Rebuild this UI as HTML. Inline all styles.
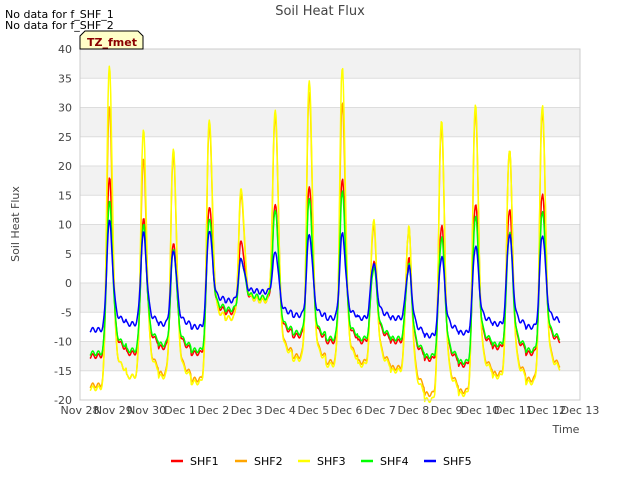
<!DOCTYPE html>
<html><head><meta charset="utf-8"><style>
body{margin:0;background:#fff;}
svg{display:block;font-family:"DejaVu Sans","Liberation Sans",sans-serif;}
</style></head><body>
<svg id="s" width="640" height="480" xmlns="http://www.w3.org/2000/svg">
<rect width="640" height="480" fill="#fff"/>
<g id="bands"></g>
<g id="lines"></g>
<rect x="80" y="49" width="500" height="351" fill="none" stroke="#ccc" stroke-width="1"/>
<text x="320" y="15" font-size="13" fill="#444" text-anchor="middle">Soil Heat Flux</text>
<text x="5" y="18" font-size="11" fill="#000">No data for f_SHF_1</text>
<text x="5" y="29" font-size="11" fill="#000">No data for f_SHF_2</text>
<path d="M80,49 L80,36 L85,31 L138,31 L143,36 L143,49 Z" fill="#ffffc8" stroke="#000" stroke-width="1"/>
<text x="87" y="46" font-size="11" font-weight="bold" fill="#8b0000">TZ_fmet</text>
<text transform="translate(19,224) rotate(-90)" font-size="11" fill="#444" text-anchor="middle">Soil Heat Flux</text>
<text x="566" y="433" font-size="11" fill="#444" text-anchor="middle">Time</text>
<g id="ticks" font-size="11" fill="#444"></g>
<g font-size="11" fill="#000">
<line x1="171" y1="461" x2="183" y2="461" stroke="#ff0000" stroke-width="2.5"/><text x="190" y="465">SHF1</text>
<line x1="235" y1="461" x2="247" y2="461" stroke="#ffa500" stroke-width="2.5"/><text x="254" y="465">SHF2</text>
<line x1="298" y1="461" x2="310" y2="461" stroke="#ffff00" stroke-width="2.5"/><text x="317" y="465">SHF3</text>
<line x1="361" y1="461" x2="373" y2="461" stroke="#00ff00" stroke-width="2.5"/><text x="380" y="465">SHF4</text>
<line x1="424" y1="461" x2="436" y2="461" stroke="#0000ff" stroke-width="2.5"/><text x="443" y="465">SHF5</text>
</g>
</svg>
<script>
var NS="http://www.w3.org/2000/svg";
function el(p,t,a,txt){var e=document.createElementNS(NS,t);for(var k in a)e.setAttribute(k,a[k]);if(txt)e.textContent=txt;p.appendChild(e);return e;}
function Y(v){return 400-(v+20)*5.85;}
function X(d){return 80+d*33.333;}
var b=document.getElementById('bands'),tk=document.getElementById('ticks');
for(var v=-20;v<40;v+=5){
  var g=(((v+20)/5)%2==1);
  el(b,'rect',{x:80,y:Y(v+5),width:500,height:5.85*5,fill:g?'#f2f2f2':'#fff'});
  el(b,'line',{x1:80,x2:580,y1:Y(v),y2:Y(v),stroke:'#ddd','stroke-width':1});
}
for(var v=-20;v<=40;v+=5){el(tk,'text',{x:72,y:Y(v)+4,'text-anchor':'end'},String(v));}
var labs=["Nov 28","Nov 29","Nov 30","Dec 1","Dec 2","Dec 3","Dec 4","Dec 5","Dec 6","Dec 7","Dec 8","Dec 9","Dec 10","Dec 11","Dec 12","Dec 13"];
for(var i=0;i<16;i++){el(tk,'text',{x:X(i),y:414,'text-anchor':'middle'},labs[i]);}
var px=[109,143,173,209,241,275,309,342,373,408,441,475,509,542].map(function(x){return (x-80)/33.333;});
var S=[
 ['#ff0000',[17,10,6,13,7,13,16,17,3,3,9,13,12,15],[-12.5,-12,-11,-12,-5,-3,-9,-10,-10,-10,-13,-14,-11,-12,-10.5]],
 ['#ffa500',[29,20,21,27,15,28,32,30,9,8,26,29,22,29],[-17.5,-16,-15.5,-16.5,-6,-3,-12.5,-13.5,-13.5,-14.5,-19,-18.5,-15.5,-16.5,-15]],
 ['#ffff00',[36,25,22,28,16,29,34,36,10,8,27,30,22,30],[-18,-16,-16,-17,-6,-3,-13,-14,-14,-15,-20,-19,-16,-17,-15.5]],
 ['#00ff00',[13,9,5,11,4,12,14,15,2,2,7,11,8,12],[-12,-11.5,-10.5,-11.5,-4.5,-2.5,-8.5,-9.5,-9.5,-9.5,-12.5,-13.5,-10.5,-11.5,-10]],
 ['#0000ff',[10,8,5,9,4,5,8,8,3,2,4,6,8,8],[-8,-7,-7,-7.5,-3,-1.5,-5.5,-6,-6,-6,-9,-8.5,-7,-7.5,-6.8]]
];
var ln=document.getElementById('lines');
S.forEach(function(s){
  var pts=[];
  for(var t=0.3;t<=14.4;t+=0.02){
    var k=0,best=99;
    for(var j=0;j<px.length;j++){var d=Math.abs(t-px[j]);if(d<best){best=d;k=j;}}
    var d=t-px[k];
    var tr=d<0?s[2][k]:s[2][k+1];
    var mid=tr*0.45;
    var w=d<0?0.1:0.13;
    var v=tr+(s[1][k]-tr)*Math.exp(-(d/w)*(d/w));
    if(d>0){var dec=Math.exp(-d/0.25);v+= (mid-tr)*(1-Math.exp(-d/0.08))*dec;}
    v+=Math.sin(t*37)*0.4;
    pts.push(X(t).toFixed(1)+','+Y(v).toFixed(1));
  }
  el(ln,'polyline',{points:pts.join(' '),fill:'none',stroke:s[0],'stroke-width':1.5,'stroke-linejoin':'round'});
});
</script>
</body></html>
